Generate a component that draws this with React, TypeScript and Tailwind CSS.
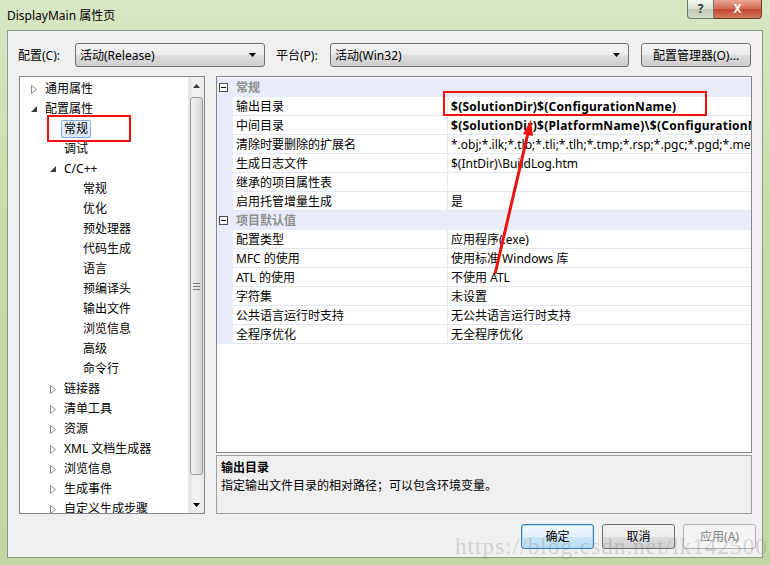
import React from 'react';

const FONT = "font-['Noto_Sans','Noto_Sans_CJK_SC',sans-serif]";

type TreeItem = { label: string; level: number; arrow?: 'closed' | 'open'; selected?: boolean };

const treeItems: TreeItem[] = [
  { label: '通用属性', level: 0, arrow: 'closed' },
  { label: '配置属性', level: 0, arrow: 'open' },
  { label: '常规', level: 1, selected: true },
  { label: '调试', level: 1 },
  { label: 'C/C++', level: 1, arrow: 'open' },
  { label: '常规', level: 2 },
  { label: '优化', level: 2 },
  { label: '预处理器', level: 2 },
  { label: '代码生成', level: 2 },
  { label: '语言', level: 2 },
  { label: '预编译头', level: 2 },
  { label: '输出文件', level: 2 },
  { label: '浏览信息', level: 2 },
  { label: '高级', level: 2 },
  { label: '命令行', level: 2 },
  { label: '链接器', level: 1, arrow: 'closed' },
  { label: '清单工具', level: 1, arrow: 'closed' },
  { label: '资源', level: 1, arrow: 'closed' },
  { label: 'XML 文档生成器', level: 1, arrow: 'closed' },
  { label: '浏览信息', level: 1, arrow: 'closed' },
  { label: '生成事件', level: 1, arrow: 'closed' },
  { label: '自定义生成步骤', level: 1, arrow: 'closed' },
];

const indent = ['pl-0', 'pl-[19px]', 'pl-[38px]'];

type Row = { cat?: string; name?: string; value?: string; bold?: boolean };

const rows: Row[] = [
  { cat: '常规' },
  { name: '输出目录', value: '$(SolutionDir)$(ConfigurationName)', bold: true },
  { name: '中间目录', value: '$(SolutionDir)$(PlatformName)\\$(ConfigurationName)', bold: true },
  { name: '清除时要删除的扩展名', value: '*.obj;*.ilk;*.tlb;*.tli;*.tlh;*.tmp;*.rsp;*.pgc;*.pgd;*.meta;$(TargetPath)' },
  { name: '生成日志文件', value: '$(IntDir)\\BuildLog.htm' },
  { name: '继承的项目属性表', value: '' },
  { name: '启用托管增量生成', value: '是' },
  { cat: '项目默认值' },
  { name: '配置类型', value: '应用程序(.exe)' },
  { name: 'MFC 的使用', value: '使用标准 Windows 库' },
  { name: 'ATL 的使用', value: '不使用 ATL' },
  { name: '字符集', value: '未设置' },
  { name: '公共语言运行时支持', value: '无公共语言运行时支持' },
  { name: '全程序优化', value: '无全程序优化' },
];

function ClosedArrow() {
  return (
    <svg width="6" height="9" viewBox="0 0 6 9">
      <path d="M0.5 0.5 L5.5 4.5 L0.5 8.5 Z" fill="#fff" stroke="#8a8a8a" strokeWidth="1" />
    </svg>
  );
}

function OpenArrow() {
  return (
    <svg width="6" height="6" viewBox="0 0 6 6">
      <polygon points="6,0 6,6 0,6" fill="#3c3c3c" />
    </svg>
  );
}

function DownTri() {
  return (
    <svg width="7" height="4" viewBox="0 0 7 4">
      <polygon points="0,0 7,0 3.5,4" fill="#000" />
    </svg>
  );
}

function Combo({ text, width }: { text: string; width: string }) {
  return (
    <div className={`${width} h-[24px] flex items-center pl-[4px] pr-[8px] rounded-[3px] border border-[#707070] bg-[linear-gradient(#f3f3f3,#ebebeb_50%,#dddddd_51%,#cfcfcf)] text-[12px] text-black`}>
      <span className="flex-1 pt-[1px]">{text}</span>
      <DownTri />
    </div>
  );
}

function Minus() {
  return (
    <svg width="9" height="9" viewBox="0 0 9 9">
      <rect x="0.5" y="0.5" width="8" height="8" fill="#fff" stroke="#4a4a4a" />
      <line x1="2" y1="4.5" x2="7" y2="4.5" stroke="#000" />
    </svg>
  );
}

export default function App() {
  return (
    <div className={`${FONT} relative w-[770px] h-[565px] overflow-hidden bg-[linear-gradient(#d8e7c4,#c7dba9_40%,#c2d7a3)] flex flex-col`}>
      {/* title bar */}
      <div className="h-[30px] flex items-start shrink-0">
        <span className="ml-[7px] mt-[7px] text-[12px] text-black">DisplayMain 属性页</span>
        <div className="ml-auto mr-[8px] flex">
          <div className="w-[27px] h-[19px] flex items-center justify-center rounded-bl-[4px] border border-[#6b7a67] border-t-0 bg-[linear-gradient(#f2f5ee,#d9e0d2_50%,#bfcab6_51%,#d3dccb)] text-[12px] font-bold text-[#3a3a3a]">?</div>
          <div className="w-[48px] h-[19px] flex items-center justify-center rounded-br-[4px] border border-[#6b3b33] border-t-0 border-l-0 bg-[linear-gradient(#e8a693,#d46a55_50%,#c2452c_51%,#d47a5e)] text-[12px] font-bold text-white">X</div>
        </div>
      </div>

      {/* client */}
      <div className="mx-[7px] mb-[7px] flex-1 bg-[#f0f0f0] border border-[#8c9a86] flex flex-col text-[12px] text-black">
        <div className="mt-[12px] h-[24px] flex items-center pl-[10px]">
          <span className="w-[57px] pt-[1px]">配置(C):</span>
          <Combo text="活动(Release)" width="w-[190px]" />
          <span className="ml-[11px] w-[54px] pt-[1px]">平台(P):</span>
          <Combo text="活动(Win32)" width="w-[299px]" />
          <div className="ml-[12px] w-[110px] h-[24px] pt-[1px] flex items-center justify-center rounded-[3px] border border-[#707070] bg-[linear-gradient(#f3f3f3,#ebebeb_50%,#dddddd_51%,#cfcfcf)]">配置管理器(O)...</div>
        </div>

        <div className="mt-[9px] h-[438px] flex pl-[11px]">
          {/* tree */}
          <div className="w-[186px] h-full bg-white border border-[#828790] flex overflow-hidden">
            <div className="flex-1 pt-[2px] overflow-hidden">
              {treeItems.map((it, i) => (
                <div key={i} className={`h-[20px] flex items-center ${indent[it.level]}`}>
                  <div className="w-[22px] pl-[11px] flex items-center">
                    {it.arrow === 'closed' && <ClosedArrow />}
                    {it.arrow === 'open' && <OpenArrow />}
                  </div>
                  <span
                    className={`h-[18px] leading-[16px] px-[2px] border rounded-[2px] whitespace-nowrap ${
                      it.selected ? 'border-[#84acdd] bg-[linear-gradient(#eef5fd,#d7e7fb)]' : 'border-transparent'
                    }`}
                  >
                    {it.label}
                  </span>
                </div>
              ))}
            </div>
            {/* scrollbar */}
            <div className="w-[16px] h-full flex flex-col bg-[linear-gradient(to_right,#e2e2e2,#f1f1f1_30%,#f1f1f1_70%,#e6e6e6)] border-l border-[#e8e8e8]">
              <div className="h-[17px] flex items-center justify-center">
                <svg width="7" height="4" viewBox="0 0 7 4"><polygon points="3.5,0 7,4 0,4" fill="#3c3c3c" /></svg>
              </div>
              <div className="mt-[3px] mx-[1px] h-[378px] rounded-[3px] border border-[#9a9a9a] bg-[linear-gradient(to_right,#f4f4f4,#e4e4e4_50%,#d4d4d4)] flex flex-col items-center justify-center gap-[2px]">
                <div className="w-[7px] h-[1px] bg-[#7a7a7a]" />
                <div className="w-[7px] h-[1px] bg-[#7a7a7a]" />
                <div className="w-[7px] h-[1px] bg-[#7a7a7a]" />
              </div>
              <div className="mt-auto h-[17px] flex items-center justify-center">
                <DownTri />
              </div>
            </div>
          </div>

          {/* property grid */}
          <div className="ml-[11px] w-[536px] h-full flex flex-col">
            <div className="h-[377px] pt-[1px] bg-white border border-[#828790] overflow-hidden">
              {rows.map((r, i) =>
                r.cat ? (
                  <div key={i} className="h-[19px] flex items-center bg-[#e9ecf8]">
                    <div className="w-[16px] pl-[2px] flex items-center"><Minus /></div>
                    <span className="pl-[3px] pt-[1px] font-semibold text-[#8e8e8e]">{r.cat}</span>
                  </div>
                ) : (
                  <div key={i} className="h-[19px] flex">
                    <div className="w-[16px] bg-[#e9ecf8]" />
                    <div className="w-[215px] pl-[3px] pt-[1px] flex items-center border-b border-r border-[#e3e7f4] whitespace-nowrap">{r.name}</div>
                    <div className={`flex-1 pl-[3px] pt-[1px] flex items-center border-b border-[#e3e7f4] whitespace-nowrap overflow-hidden ${r.bold ? 'font-bold tracking-[0.27px]' : ''}`}>{r.value}</div>
                  </div>
                )
              )}
            </div>
            <div className="mt-[2px] flex-1 border border-[#a0a0a0] bg-[#f0f0f0] px-[4px] pt-[3px] leading-[18px]">
              <div className="font-bold">输出目录</div>
              <div>指定输出文件目录的相对路径；可以包含环境变量。</div>
            </div>
          </div>
        </div>

        <div className="mt-[10px] flex justify-end gap-[8px] pr-[6px]">
          <div className="w-[73px] h-[25px] pt-[1px] flex items-center justify-center rounded-[3px] border border-[#3c7fb1] bg-[linear-gradient(#f0f8fd,#e2f0fa_50%,#cbe6f7_51%,#bcdcf3)] shadow-[inset_0_0_0_1px_#a9dcf6]">确定</div>
          <div className="w-[73px] h-[25px] pt-[1px] flex items-center justify-center rounded-[3px] border border-[#707070] bg-[linear-gradient(#f3f3f3,#ebebeb_50%,#dddddd_51%,#cfcfcf)]">取消</div>
          <div className="w-[73px] h-[25px] pt-[1px] flex items-center justify-center rounded-[3px] border border-[#adb2b5] bg-[#f4f4f4] text-[#838383]">应用(A)</div>
        </div>
      </div>

      {/* annotations */}
      <div className="absolute left-[47px] top-[115px] w-[84px] h-[27px] border-2 border-[#ee1111]" />
      <div className="absolute left-[443px] top-[91px] w-[264px] h-[25px] border-2 border-[#ee1111]" />
      <svg className="absolute left-0 top-0" width="770" height="565" viewBox="0 0 770 565">
        <line x1="495" y1="274" x2="528" y2="133" stroke="#ee1111" strokeWidth="3" />
        <polygon points="531,120 533,136 523,134" fill="#ee1111" />
      </svg>
      <div className="absolute left-[455px] top-[530px] font-['Liberation_Serif',serif] text-[23px] tracking-[1.1px] text-[rgba(140,140,140,0.32)] whitespace-nowrap">https://blog.csdn.net/lk142500</div>
    </div>
  );
}
